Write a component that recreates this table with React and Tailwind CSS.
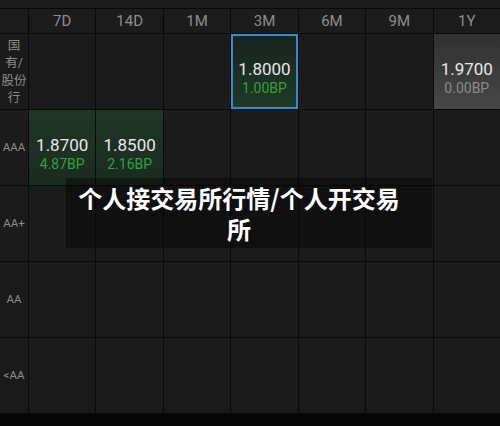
import React from 'react';

const tenors = ['7D', '14D', '1M', '3M', '6M', '9M', '1Y'];

// grade label, then one entry per tenor (null = empty cell)
const rows = [
  {
    label: ['国', '有/', '股份', '行'],
    cells: [null, null, null, { v: '1.8000', bp: '1.00BP', kind: 'selected' }, null, null, { v: '1.9700', bp: '0.00BP', kind: 'flat' }],
  },
  {
    label: ['AAA'],
    cells: [{ v: '1.8700', bp: '4.87BP', kind: 'up' }, { v: '1.8500', bp: '2.16BP', kind: 'up' }, null, null, null, null, null],
  },
  { label: ['AA+'], cells: [null, null, null, null, null, null, null] },
  { label: ['AA'], cells: [null, null, null, null, null, null, null] },
  { label: ['<AA'], cells: [null, null, null, null, null, null, null] },
];

const cellBg = {
  selected: 'border-2 border-[#2b8fd4] bg-gradient-to-b from-[#19231d] to-[#1f3a28]',
  flat: 'bg-gradient-to-b from-[#313131] to-[#474747]',
  up: 'bg-gradient-to-b from-[#1f3626] to-[#1b2c21]',
};

function QuoteCell({ cell }) {
  if (!cell) return <div className="bg-[#1b1b1b]" />;
  return (
    <div className={`flex flex-col items-center justify-center pt-[14px] ${cellBg[cell.kind]}`}>
      <span className="text-[17px] leading-[20px] text-[#e8e8e8]">{cell.v}</span>
      <span className={`text-[14px] leading-[19px] ${cell.kind === 'flat' ? 'text-[#8a8a8a]' : 'text-[#2fa33a]'}`}>{cell.bp}</span>
    </div>
  );
}

export default function App() {
  return (
    <div
      className="relative w-[500px] h-[426px] overflow-hidden bg-[#060606]"
      style={{ fontFamily: 'Roboto, "Noto Sans CJK SC", sans-serif' }}
    >
      <div className="h-[8px] bg-[#1c1c1c]" />
      <div className="grid grid-cols-[28px_repeat(7,1fr)] grid-rows-[24px_repeat(5,75px)] gap-px bg-[#0a0a0a] pt-px pb-px">
        <div className="bg-[#1c1c1c]" />
        {tenors.map((t) => (
          <div key={t} className="bg-[#1c1c1c] flex items-center justify-center text-[15px] text-[#8d8d8d]">
            {t}
          </div>
        ))}
        {rows.map((r, ri) => (
          <React.Fragment key={ri}>
            <div className="bg-[#1b1b1b] flex flex-col items-center justify-center text-[#8c8c8c]">
              {r.label.length > 1 ? (
                r.label.map((l) => (
                  <span key={l} className="text-[12.5px] leading-[17.5px] whitespace-nowrap">{l}</span>
                ))
              ) : (
                <span className="text-[11.5px] whitespace-nowrap">{r.label[0]}</span>
              )}
            </div>
            {r.cells.map((c, ci) => (
              <QuoteCell key={ci} cell={c} />
            ))}
          </React.Fragment>
        ))}
      </div>

      {/* caption overlay */}
      <div className="absolute left-[66px] top-[178px] w-[366px] bg-black/40 pl-3 pr-8 py-1 text-center text-white font-bold text-[24px] leading-[31px]"
        style={{ fontFamily: '"Noto Sans CJK SC", sans-serif' }}>
        个人接交易所行情/个人开交易所
      </div>
    </div>
  );
}
